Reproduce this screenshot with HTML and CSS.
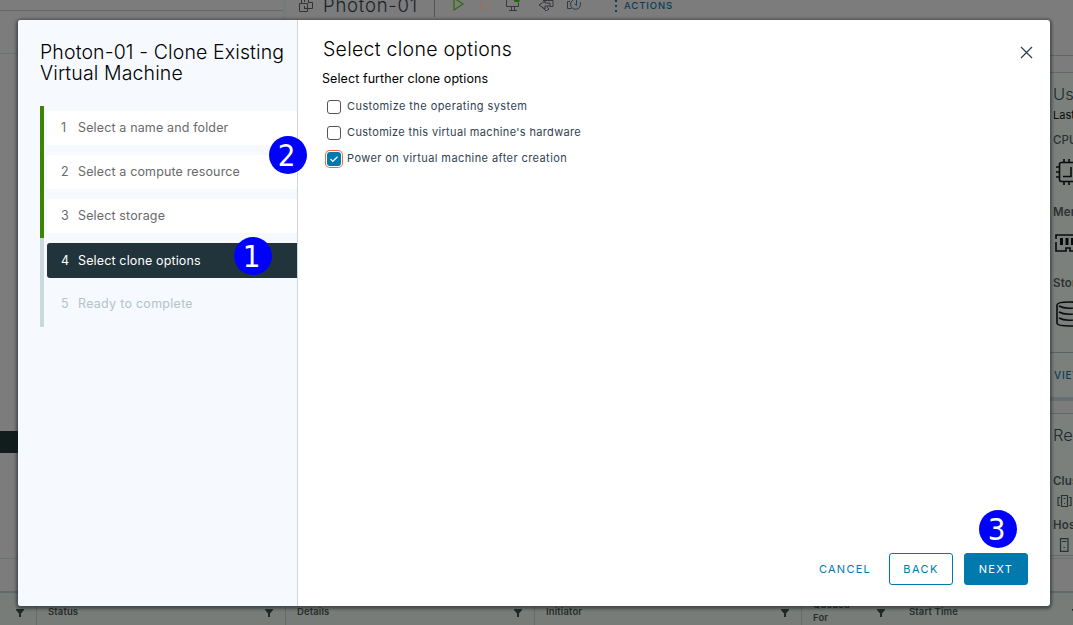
FILE: index.html
```html
<!DOCTYPE html>
<html lang="en">
<head>
<meta charset="utf-8">
<title>Clone Existing Virtual Machine</title>
<link rel="stylesheet" href="styles.css">
</head>
<body>
<div class="app">
  <div class="workspace">
    <aside class="tree">
      <div class="tree-head"></div>
      <div class="tree-tools"></div>
      <div class="tree-selected"></div>
    </aside>
    <main class="object">
      <header class="object-head">
        <svg class="vm-icon" width="16" height="15" viewBox="0 0 16 15"><path d="M1.500 4.500h8v8h-8zM6.500 9.500h8v-6h-4M6.500 7v3M6.500 3V1M10.500 4V.5M3.500 1v3"/></svg>
        <h1 class="object-name">Photon-01</h1>
        <div class="toolbar">
          <svg class="tool play" width="12" height="14" viewBox="0 0 12 14"><path d="M1 1l9 6-9 6z"/></svg>
          <svg class="tool stop" width="12" height="14" viewBox="0 0 12 14"><path d="M1.500 2.500h9v9h-9z"/></svg>
          <svg class="tool" width="16" height="14" viewBox="0 0 16 14"><path d="M9 1.500H1.500v8h12V6M4 13.500h8M6.500 10v3M9.500 10v3"/><path class="green" d="M9 4l2-1 3-1v3z"/></svg>
          <svg class="tool" width="16" height="14" viewBox="0 0 16 14"><path d="M5 3.500h10v6h-3M1 8l6-4v2h5v3H7v3zM4 10l4 4 3-2-2-2"/></svg>
          <svg class="tool" width="16" height="14" viewBox="0 0 16 14"><path d="M4 4.500H1.500v7h4M7 3a5 5 0 1 0 7 2"/><path class="blue" d="M10.500 3v5.500l-2-2"/></svg>
        </div>
        <span class="kebab"></span>
        <span class="actions">ACTIONS</span>
      </header>
    </main>
    <aside class="cards">
      <section class="card usage">
        <h2>Usage</h2>
        <p class="updated">Last updated</p>
        <h3>CPU</h3>
        <svg class="metric" width="28" height="28" viewBox="0 0 28 28"><rect x="4.500" y="4.500" width="19" height="19" rx="2"/><path d="M8 18.500h8V9M1 9h3M1 14h3M1 19h3M9 1v3M14 1v3M19 1v3M9 24v3M14 24v3M19 24v3"/></svg>
        <h3>Memory</h3>
        <svg class="metric" width="28" height="28" viewBox="0 0 28 28"><path d="M1 10V6h26v4M1 13v9h10v-3h4v3h12v-9"/><path class="chips" d="M6.500 9v7M12 9v7M17.500 9v7M23 9v7"/></svg>
        <h3>Storage</h3>
        <svg class="metric" width="28" height="28" viewBox="0 0 28 28"><path d="M2 5c0-4 24-4 24 0v18c0 4-24 4-24 0zM4 6c5 3 15 3 20 0M4 12c5 3 15 3 20 0M4 18c5 3 15 3 20 0"/></svg>
        <div class="card-foot">VIEW STATS</div>
      </section>
      <section class="card related">
        <h2>Related Objects</h2>
        <h3>Cluster</h3>
        <svg class="rel" width="16" height="14" viewBox="0 0 16 14"><path d="M4.500 1.500h6v11h-6zM3 3.500H1v8h2M12 3.500h2v8h-2M6.500 4.500h2"/><path d="M7 9.500h1"/></svg>
        <h3>Host</h3>
        <svg class="rel host" width="16" height="14" viewBox="0 0 16 14"><path d="M3.500 .7h7.500v12.600H3.500zM5 3.500h4.500"/><path d="M6.500 9.500h1.500"/></svg>
      </section>
    </aside>
  </div>
  <div class="task-tools"></div>
  <div class="tasks">
    <div class="th"><span></span><svg class="funnel" width="8" height="8" viewBox="0 0 8 8"><path d="M0 0h8v1L5 4.500V8H3V4.500L0 1z"/></svg></div>
    <div class="th"><span>Status</span><svg class="funnel" width="8" height="8" viewBox="0 0 8 8"><path d="M0 0h8v1L5 4.500V8H3V4.500L0 1z"/></svg></div>
    <div class="th"><span>Details</span><svg class="funnel" width="8" height="8" viewBox="0 0 8 8"><path d="M0 0h8v1L5 4.500V8H3V4.500L0 1z"/></svg></div>
    <div class="th"><span>Initiator</span><svg class="funnel" width="8" height="8" viewBox="0 0 8 8"><path d="M0 0h8v1L5 4.500V8H3V4.500L0 1z"/></svg></div>
    <div class="th queued"><span>Queued<br>For</span><svg class="funnel" width="8" height="8" viewBox="0 0 8 8"><path d="M0 0h8v1L5 4.500V8H3V4.500L0 1z"/></svg></div>
    <div class="th start"><span>Start Time</span><svg class="funnel" width="8" height="8" viewBox="0 0 8 8"><path d="M0 0h8v1L5 4.500V8H3V4.500L0 1z"/></svg></div>
  </div>
</div>

<div class="wizard" role="dialog">
  <nav class="steps">
    <h1 class="wizard-title">Photon-01 - Clone Existing<br>Virtual Machine</h1>
    <ol class="step-list">
      <li class="step done"><div class="step-box"><span class="num">1</span><span>Select a name and folder</span></div></li>
      <li class="step done"><div class="step-box"><span class="num">2</span><span>Select a compute resource</span></div></li>
      <li class="step done"><div class="step-box"><span class="num">3</span><span>Select storage</span></div></li>
      <li class="step current"><div class="step-box"><span class="num">4</span><span>Select clone options</span></div></li>
      <li class="step pending"><div class="step-box"><span class="num">5</span><span>Ready to complete</span></div></li>
    </ol>
  </nav>
  <section class="page">
    <div class="page-head">
      <h2 class="page-title">Select clone options</h2>
      <svg class="close" width="13" height="13" viewBox="0 0 13 13"><path d="M1 1l11 11M12 1L1 12"/></svg>
    </div>
    <p class="lead">Select further clone options</p>
    <div class="options">
      <label class="option"><span class="box"></span><span>Customize the operating system</span></label>
      <label class="option"><span class="box"></span><span>Customize this virtual machine's hardware</span></label>
      <label class="option"><span class="box checked"><svg width="10" height="10" viewBox="0 0 10 10"><path d="M1.500 5l2.300 2.300L8.500 2.700"/></svg></span><span>Power on virtual machine after creation</span></label>
    </div>
    <div class="buttons">
      <button class="btn link">CANCEL</button>
      <button class="btn outline">BACK</button>
      <button class="btn primary">NEXT</button>
    </div>
  </section>
</div>
<span class="callout c1">1</span>
<span class="callout c2">2</span>
<span class="callout c3">3</span>
</body>
</html>
```
FILE: styles.css
```css
* { box-sizing: border-box; }
body { margin: 0; width: 1073px; height: 625px; overflow: hidden; position: relative; font-family: Inter, "Open Sans", sans-serif; background: #7c7c7c; }
h1, h2, h3, p, ol { margin: 0; padding: 0; font-weight: 400; }
svg { display: block; flex: none; fill: none; stroke: #2d3234; }

/* dimmed application */
.app { display: flex; flex-direction: column; height: 625px; overflow: hidden; }
.workspace { display: grid; grid-template-columns: 286px 764px 23px; height: 559px; border-bottom: 1px solid #6b7275; }
.tree { border-right: 3px solid #757a7a; overflow: hidden; }
.tree-head { height: 11px; border-bottom: 1px solid #62686a; }
.tree-tools { height: 43px; border-bottom: 1px solid #697275; }
.tree-selected { height: 22px; margin-top: 377px; background: #111c1c; }
.object { background: #7c7c7c; overflow: hidden; }
.object-head { display: flex; height: 20px; }
.vm-icon { margin: -1px 0 0 12px; stroke: #303437; }
.object-name { width: 112px; margin-left: 9px; margin-top: -7px; height: 24px; border-right: 1px solid #505759; font-size: 18.500px; line-height: 24px; color: #17232a; white-space: nowrap; font-weight: 300; letter-spacing: .78px; }
.toolbar { display: flex; margin: -3px 0 0 18px; gap: 14px; }
.tool { stroke: #33393c; }
.play { stroke: #2d6c0b; stroke-width: 1.200; }
.stop { stroke: #9a6e64; }
.toolbar .tool:nth-child(4) { margin-left: 3px; }
.toolbar .tool:nth-child(5) { margin-left: -2px; }
.green { stroke: #226507; fill: #226507; }
.blue { stroke: #0a4868; }
.kebab { width: 2px; height: 14px; margin: 0 7px 0 33px; background: repeating-linear-gradient(#0b4257 0 2px, transparent 2px 5px); }
.actions { font-size: 9.500px; line-height: 12px; font-weight: 500; letter-spacing: .9px; color: #093d55; }
.cards { overflow: hidden; padding-top: 55px; background: linear-gradient(#7c7c7c 55px, #606667 55px, #606667 56px, #7c7c7c 56px); }
.card { background: #7b807c; border-top: 1px solid #626869; padding-left: 3px; white-space: nowrap; color: #2d3233; }
.card h2 { font-size: 16.500px; line-height: 22px; color: #202a2e; font-weight: 300; }
.card h3 { font-size: 11.500px; line-height: 16px; font-weight: 600; letter-spacing: .15px; }
.usage { margin-top: 17px; height: 329px; padding-top: 10px; border-bottom: 4px solid #667072; }
.updated { font-size: 11px; line-height: 16px; margin: 2px 0 9px; color: #090b0b; }
.card .updated + h3 { font-weight: 500; margin-bottom: 10px; }
.metric { margin: 9px 0 18px 2px; stroke: #080b0c; stroke-width: 1.600; }
.chips { stroke-width: 3; }
.card-foot { border-top: 1px solid #596366; margin: 24px 0 0 -3px; padding: 15px 0 0 4px; font-size: 10px; line-height: 14px; color: #073e57; letter-spacing: .8px; font-weight: 500; }
.related { margin-top: 12px; height: 143px; padding-top: 10px; border-bottom: 1px solid #656b6a; }
.related h2 { margin-bottom: 27px; }
.rel { margin: 5px 0 9px 4px; stroke: #2b3032; stroke-width: 1.200; }
.task-tools { height: 34px; border-bottom: 2px solid #606a6d; }
.tasks { flex: 1; display: grid; grid-template-columns: 37px 249px 249px 267px 97px 187px; background: #777c78; }
.th { display: flex; align-items: flex-start; justify-content: space-between; padding: 12px 12px 0 11px; border-right: 1px solid #666b6a; font-size: 9.500px; line-height: 13px; font-weight: 600; color: #292d2d; letter-spacing: .13px; }
.th.queued { padding-top: 5px; padding-right: 14px; border-right: 0; }
.th.start { padding: 12px 6px 0 10px; border-right: 0; }
.funnel { margin-top: 4px; fill: #222727; stroke: none; }
.queued .funnel { margin-top: 11px; }

/* wizard dialog */
.wizard { position: absolute; left: 18px; top: 20px; width: 1032px; height: 586px; display: flex; overflow: hidden; background: #fff; border-radius: 3px; box-shadow: 0 1px 3px 2px rgba(20, 28, 28, .5); }
.steps { width: 280px; background: #f6faff; border-right: 1px solid #ccd7db; padding: 22px 0 0 22px; }
.wizard-title { height: 64px; font-size: 19.500px; line-height: 21px; font-weight: 300; color: #000; white-space: nowrap; letter-spacing: .12px; }
.step-list { list-style: none; }
.step { height: 44px; border-left: 4px solid #3c8500; padding: 5px 0 0 3px; }
.step-box { height: 34px; display: flex; align-items: center; gap: 9px; padding: 0 0 2px 14px; background: #fff; border-radius: 3px 0 0 3px; font-size: 12.500px; color: #6a6a6a; white-space: nowrap; letter-spacing: .14px; }
.num { width: 8px; }
.current, .pending { border-color: #ccd9da; }
.current .step-box { height: 35px; padding-bottom: 0; background: #21333b; color: #fff; }
.pending { height: 45px; }
.pending .step-box { background: none; color: #b3c3c8; letter-spacing: .27px; }
.page { flex: 1; display: flex; flex-direction: column; padding: 18px 22px 21px 24px; }
.page-head { display: flex; justify-content: space-between; height: 32px; }
.page-title { font-size: 19.500px; line-height: 22px; font-weight: 300; color: #000; padding-left: 1px; letter-spacing: .27px; }
.close { margin: 8px -5px 0 0; stroke: #314351; stroke-width: 1.300; }
.lead { font-size: 12.500px; line-height: 18px; color: #000; letter-spacing: .08px; }
.options { padding: 5px 0 0 5px; }
.option { display: flex; align-items: center; height: 26px; gap: 6px; font-size: 11px; color: #314351; letter-spacing: .34px; }
.option:nth-child(odd) { letter-spacing: .42px; }
.box { width: 14px; height: 14px; border: 1px solid #555; border-radius: 3px; margin-top: 1px; }
.box.checked { border: 0; background: #0079ad; box-shadow: 0 0 0 1px #fff, 0 0 0 2px #ee6a3c; display: flex; align-items: center; justify-content: center; }
.checked svg { stroke: #fff; stroke-width: 1.200; }
.buttons { margin-top: auto; display: flex; justify-content: flex-end; }
.btn { width: 64px; height: 32px; padding: 0; border: 1px solid #0079ad; border-radius: 3px; background: #fff; color: #0079ad; font: 400 11px/30px Inter, sans-serif; letter-spacing: 1.400px; }
.btn.link { border-color: transparent; width: 76px; margin-right: 6px; letter-spacing: 1.250px; }
.btn.outline { margin-right: 11px; }
.btn.primary { background: #0079ad; color: #fff; }

/* numbered callouts */
.callout { position: absolute; width: 38px; height: 38px; border-radius: 50%; background: #00f; color: #fff; text-align: center; font: 31px/39px "DejaVu Sans Condensed", "DejaVu Sans", sans-serif; font-stretch: condensed; text-indent: -3px; }
.c1 { left: 234px; top: 237px; }
.c2 { left: 269px; top: 136px; }
.c3 { left: 979px; top: 510px; }
```
